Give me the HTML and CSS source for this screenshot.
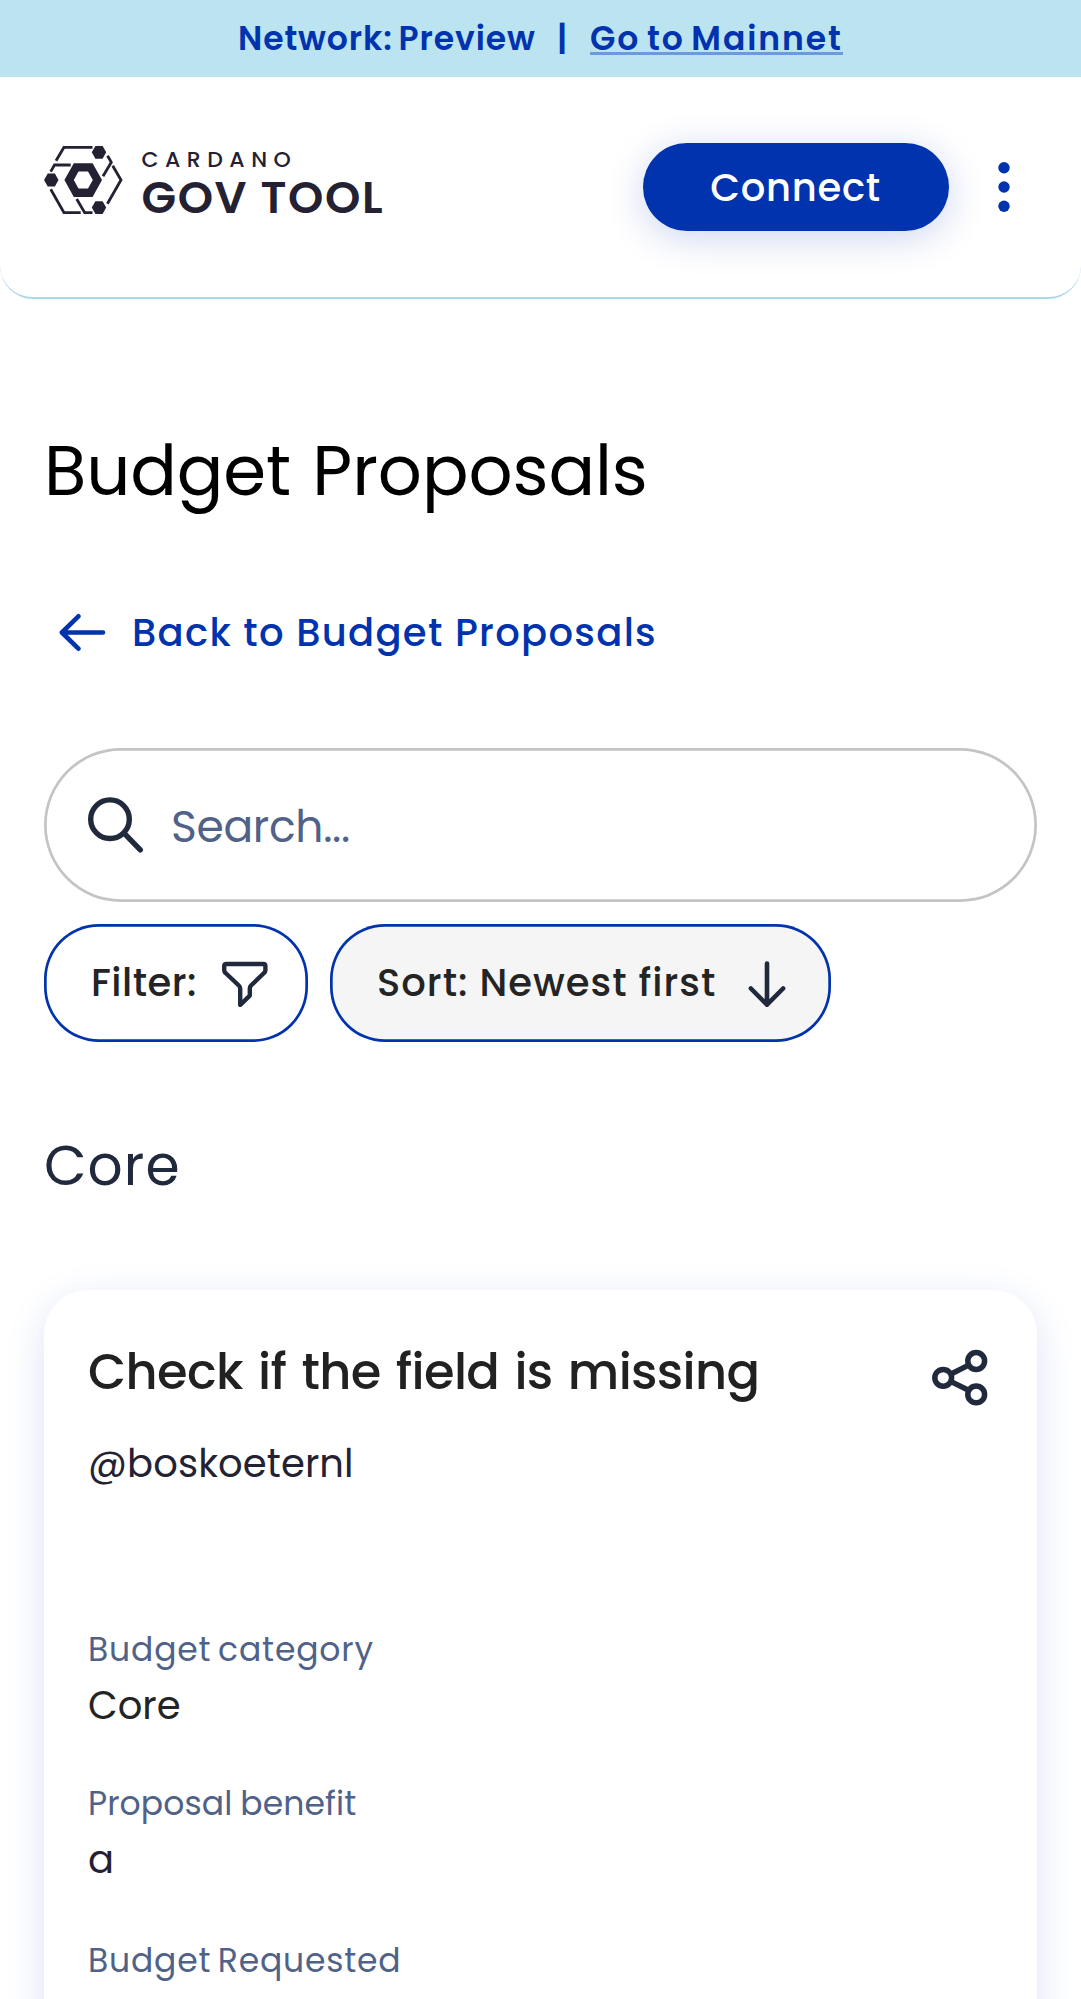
FILE: index.html
```html
<!DOCTYPE html>
<html lang="en">
<head>
<meta charset="utf-8">
<title>Budget Proposals</title>
<link rel="stylesheet" href="styles.css">
</head>
<body>
<div class="banner">
  <span class="banner-network">Network: Preview</span>
  <span class="banner-divider">|</span>
  <a class="banner-link">Go to Mainnet</a>
</div>

<header class="header">
  <div class="brand">
    <svg class="brand-mark" width="79" height="68" viewBox="0 0 79 68">
      <g fill="none" stroke="#242232" stroke-width="2.8">
        <path d="M12 14.7 20 1.3H48.5"/>
        <path d="M6.7 25.6 10.5 19H26.7"/>
        <path d="M6.7 43.2 20 66.7H36.7"/>
        <path d="M32.7 53 40.7 66.7H48.5"/>
        <path d="M63.5 9.7 67.3 16.2 59 30.3"/>
        <path d="M68.7 19.7 77 34 63.4 57.7"/>
      </g>
      <g fill="#242232">
        <path d="M51.4 0H58.6L62.2 6.3 58.6 12.8H51.4L47.8 6.3Z"/>
        <path d="M3.7 27.6H10.9L14.5 34 10.9 40.5H3.7L.1 34Z"/>
        <path d="M51.4 55.2H58.6L62.2 61.6 58.6 68H51.4L47.8 61.6Z"/>
        <path fill-rule="evenodd" d="M29.8 17.2H48.6L58 34 48.6 51H29.8L20.4 34ZM34.5 25.6 29.8 34 34.5 42.4H44L48.8 34 44 25.6Z"/>
      </g>
    </svg>
    <div class="brand-text">
      <span class="brand-top">CARDANO</span>
      <span class="brand-name">GOV TOOL</span>
    </div>
  </div>
  <div class="header-actions">
    <button class="connect">Connect</button>
    <svg class="menu" width="12" height="52" viewBox="0 0 12 52" fill="#0033ad">
      <circle cx="6" cy="6.7" r="5.7"/><circle cx="6" cy="26" r="5.7"/><circle cx="6" cy="45.3" r="5.7"/>
    </svg>
  </div>
</header>

<main class="main">
  <h1 class="title">Budget Proposals</h1>

  <a class="back">
    <svg class="back-icon" width="48" height="40" viewBox="0 0 48 40" fill="none" stroke="#0033ad" stroke-width="4.6" stroke-linecap="round" stroke-linejoin="round">
      <path d="M44 19.5H2.9M19.4 3.3 2.9 19.5 19.4 35.7"/>
    </svg>
    <span>Back to Budget Proposals</span>
  </a>

  <div class="search">
    <svg width="56" height="56" viewBox="0 0 56 56" fill="none" stroke="#212a3d" stroke-width="5.4" stroke-linecap="round">
      <circle cx="22" cy="22.2" r="19.3"/><path d="M36.5 36.7 52.3 52.9"/>
    </svg>
    <span class="search-placeholder">Search...</span>
  </div>

  <div class="controls">
    <button class="chip chip-filter">
      <span class="chip-label">Filter:</span>
      <svg width="46" height="48" viewBox="0 0 46 48" fill="none" stroke="#212a3d" stroke-width="4.4" stroke-linejoin="round">
        <path d="M4.6 5H41.2Q43.4 5 43.4 7.2V11Q43.4 12.8 42 14L29 26.5Q27.8 27.8 27.8 29.5V36.6L18.2 46V29.5Q18.2 27.8 16.8 26.5L3.6 14Q2.2 12.8 2.2 11V7.2Q2.2 5 4.6 5Z"/>
      </svg>
    </button>
    <button class="chip chip-sort">
      <span class="chip-label">Sort: Newest first</span>
      <svg width="38" height="48" viewBox="0 0 38 48" fill="none" stroke="#212a3d" stroke-width="4.6" stroke-linecap="round" stroke-linejoin="round">
        <path d="M19 4.5V45.7M2.9 29.5 19 45.7 35.1 29.5"/>
      </svg>
    </button>
  </div>

  <h2 class="section-title">Core</h2>

  <article class="card">
    <div class="card-head">
      <h3 class="card-title">Check if the field is missing</h3>
      <svg class="share" width="56" height="58" viewBox="0 0 56 58" fill="none" stroke="#212a3d" stroke-width="5.5">
        <path d="M18.6 25.2 37.6 15.6M18.6 32.4 37.6 41.8"/>
        <circle cx="11.2" cy="28.8" r="8.4"/><circle cx="44.2" cy="12" r="8.4"/><circle cx="44.2" cy="45.4" r="8.4"/>
      </svg>
    </div>
    <p class="author">@boskoeternl</p>
    <dl class="fields">
      <div class="field field-category">
        <dt class="label label-category">Budget category</dt>
        <dd class="value">Core</dd>
      </div>
      <div class="field field-benefit">
        <dt class="label label-benefit">Proposal benefit</dt>
        <dd class="value value-benefit">a</dd>
      </div>
      <div class="field">
        <dt class="label label-requested">Budget Requested</dt>
      </div>
    </dl>
  </article>
</main>
</body>
</html>
```
FILE: styles.css
```css
* { box-sizing: border-box; }

html, body { height: 1999px; overflow: hidden; }

body {
  margin: 0;
  display: flex;
  flex-direction: column;
  background: #fff;
  color: #242232;
  font-family: Poppins, Inter, sans-serif;
  white-space: nowrap;
}

h1, h2, h3, p, dl, dd { margin: 0; font-weight: 400; }
button { border: 0; font: inherit; white-space: nowrap; }
svg { display: block; flex: none; }

.banner {
  height: 77px;
  flex: none;
  display: flex;
  align-items: center;
  padding-left: 238px;
  background: #bbe3f0;
  color: #0033ad;
  font-size: 33px;
  font-weight: 600;
  line-height: 40px;
}
.banner-network { width: 314px; letter-spacing: .9px; word-spacing: -3px; }
.banner-divider { width: 20px; text-align: center; }
.banner-link {
  width: 253px;
  height: 33px;
  margin-left: 18px;
  line-height: 33px;
  letter-spacing: 1.9px;
  word-spacing: -3px;
  border-bottom: 3px solid #6c9ada;
}

.header {
  height: 222px;
  flex: none;
  display: flex;
  justify-content: space-between;
  align-items: flex-start;
  padding: 66px 71.5px 0 44px;
  border-bottom: 2px solid #acd8e6;
  border-radius: 0 0 33px 33px;
}
.brand { display: flex; gap: 18.5px; padding-top: 3px; }
.brand-text { display: flex; flex-direction: column; }
.brand-top {
  height: 28px;
  font-size: 22px;
  font-weight: 500;
  line-height: 28px;
  letter-spacing: 6.5px;
}
.brand-name {
  font-size: 45px;
  font-weight: 600;
  line-height: 48px;
  letter-spacing: 1.6px;
}
.header-actions { display: flex; align-items: center; gap: 48.5px; }
.connect {
  width: 306px;
  height: 88px;
  padding: 0 1px 0 0;
  border-radius: 44px;
  background: #0033ad;
  box-shadow: 0 7px 38px rgba(0, 51, 173, .2);
  color: #fff;
  font-size: 38.5px;
  font-weight: 500;
  letter-spacing: .72px;
}

.main { display: flex; flex-direction: column; padding: 132px 44px 0; }
.title {
  color: #000;
  font-size: 69px;
  line-height: 80px;
  letter-spacing: -.1px;
  word-spacing: 3px;
}
.back {
  display: flex;
  align-items: center;
  gap: 25px;
  margin-top: 97px;
  padding-left: 15px;
  color: #0033ad;
  font-size: 38.5px;
  font-weight: 500;
  line-height: 50px;
  letter-spacing: 1.31px;
}
.search {
  height: 154px;
  display: flex;
  align-items: center;
  gap: 27px;
  margin-top: 90px;
  padding-left: 44px;
  box-shadow: inset 0 0 0 2.7px #c4c4c4;
  border-radius: 77px;
}
.search-placeholder {
  padding-top: 3px;
  color: #506288;
  font-size: 44px;
  letter-spacing: -.33px;
}
.controls { display: flex; gap: 22px; margin-top: 22px; }
.chip {
  height: 118px;
  display: flex;
  align-items: center;
  justify-content: space-between;
  box-shadow: inset 0 0 0 2.7px #0033ad;
  border-radius: 55px;
  background: #fff;
  color: #242424;
  font-size: 38.5px;
  font-weight: 500;
}
.chip-label { padding-bottom: 2px; }
.chip-filter { width: 264px; padding: 0 40px 0 47px; letter-spacing: .5px; }
.chip-sort { width: 500.5px; padding: 0 44.5px 0 47px; background: #f5f5f5; letter-spacing: 1.02px; }

.section-title {
  margin-top: 93px;
  color: #212a3d;
  font-size: 55px;
  line-height: 62px;
  letter-spacing: 1.1px;
}
.card {
  height: 900px;
  margin-top: 92.5px;
  padding: 52.5px 44px 0;
  border-radius: 44px;
  background: #fff;
  box-shadow: 0 11px 41px #dde3f5;
}
.card-head { height: 60px; display: flex; justify-content: space-between; }
.card-title {
  color: #212121;
  font-size: 49.5px;
  font-weight: 500;
  line-height: 60px;
  letter-spacing: -.65px;
  word-spacing: 3px;
}
.share { margin: 7px 4.7px 0 0; }
.author {
  margin-top: 36.5px;
  font-size: 38.5px;
  line-height: 50px;
  letter-spacing: .1px;
}
.fields { margin-top: 141px; }
.field { display: flex; flex-direction: column; gap: 11px; }
.field-category { margin-bottom: 53px; }
.field-benefit { margin-bottom: 56px; }
.label { color: #506288; font-size: 33px; line-height: 40px; }
.label-category { letter-spacing: .83px; word-spacing: -3px; }
.label-benefit { letter-spacing: .1px; word-spacing: -1px; }
.label-requested { letter-spacing: .8px; word-spacing: -3px; }
.value {
  color: #242424;
  font-size: 38.5px;
  line-height: 50px;
}
.value-benefit { color: #242232; }
```
